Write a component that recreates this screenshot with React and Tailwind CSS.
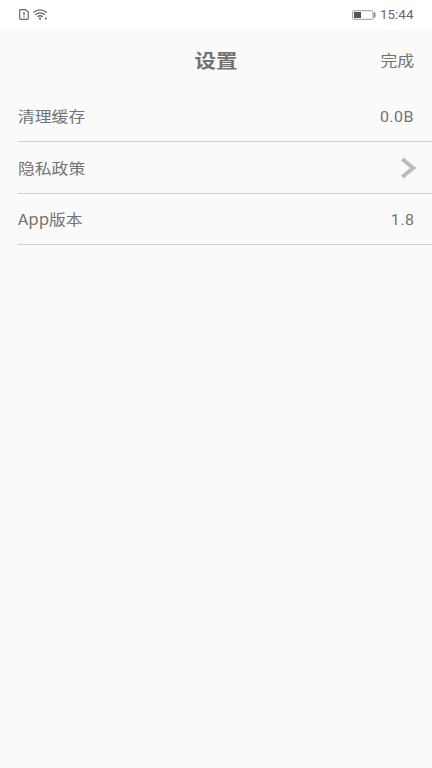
const rows = [
  { label: '清理缓存', value: '0.0B' },
  { label: '隐私政策', chevron: true },
  { label: 'App版本', value: '1.8' },
];

function StatusBar() {
  return (
    <div className="flex h-[29px] items-center justify-between bg-white pl-[19px] pr-[23px] text-[#666]">
      <div className="flex items-center gap-[4px]">
        <svg width="10" height="11" viewBox="0 0 10 11" fill="none" stroke="currentColor">
          <path d="M1.7.7h4.8L9.3 3v6.2q0 1.1-1.1 1.1H1.8Q.7 10.3.7 9.2V1.7Q.7.7 1.7.7Z" strokeWidth="1.2" />
          <path d="M5 3v3.3M5 7.4v1.2" strokeWidth="1.4" />
        </svg>
        <svg width="15" height="11" viewBox="0 0 15 11" fill="none" stroke="currentColor" strokeWidth="1.4">
          <path d="M.4 3.5Q7-1.8 13.8 3.5M2.4 5.7Q7 2 11.8 5.7M4.5 7.8Q7 5.8 9.7 7.8" />
          <circle cx="7" cy="9.7" r="1.1" fill="currentColor" stroke="none" />
          <circle cx="12.9" cy="9.4" r="1" fill="currentColor" stroke="none" />
        </svg>
      </div>
      <div className="flex items-center">
        <svg width="24" height="10" viewBox="0 0 24 10" fill="none">
          <rect x=".6" y=".7" width="20.4" height="8.6" rx="1.5" stroke="#999" />
          <rect x="2" y="2" width="7" height="6" fill="#555" />
          <path d="M22.6 2.5v5" stroke="#777" strokeWidth="1.5" />
        </svg>
        <span className="ml-[4px] inline-block w-[29px] origin-left scale-x-[1.12] whitespace-nowrap font-[Roboto,sans-serif] text-[12px] leading-[14px]">15:44</span>
      </div>
    </div>
  );
}

export default function App() {
  return (
    <div className="flex h-[768px] w-[432px] flex-col overflow-hidden bg-[#fafafa] font-['Noto_Sans_CJK_SC',sans-serif] text-[#737373]">
      <StatusBar />
      <header className="grid h-[61px] grid-cols-3 items-center pl-[18px] pr-[18px]">
        <span />
        <h1 className="origin-center scale-x-[1.13] text-center text-[19px] font-bold leading-[28px]">设置</h1>
        <span className="origin-right scale-x-[1.12] text-right text-[15px] leading-[24px]">完成</span>
      </header>
      <main className="pl-[18px] pt-px">
        {rows.map((row) => (
          <div key={row.label} className="flex h-[51.4px] items-center justify-between border-b border-[#d0d0d0] pr-[18px]">
            <span className="inline-block origin-left scale-x-[1.12] text-[15px] leading-[24px]">{row.label}</span>
            {row.chevron ? (
              <svg className="-mr-[2px]" width="16" height="22" viewBox="0 0 16 22" fill="none" stroke="#bbb" strokeWidth="3.8">
                <path d="m2.2 2 11 9-11 9" />
              </svg>
            ) : (
              <span className="inline-block origin-right scale-x-[1.1] pt-[4px] font-[Roboto,sans-serif] text-[14.5px] font-normal leading-[24px] tracking-[0.4px]">{row.value}</span>
            )}
          </div>
        ))}
      </main>
    </div>
  );
}
